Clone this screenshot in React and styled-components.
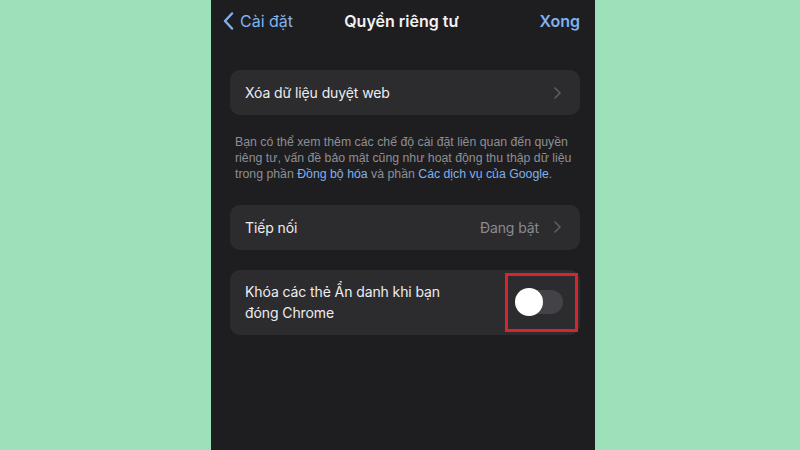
import React from 'react';
import styled, { createGlobalStyle } from 'styled-components';

const Global = createGlobalStyle`
  html, body { margin: 0; padding: 0; }
  body {
    width: 800px;
    height: 450px;
    overflow: hidden;
    background: #9ee0b9;
    font-family: Inter, "Noto Sans", "Liberation Sans", sans-serif;
    -webkit-font-smoothing: antialiased;
  }
`;

const Stage = styled.div`
  width: 800px;
  height: 450px;
  display: flex;
  justify-content: center;
  padding-left: 6px;
  box-sizing: border-box;
`;

const Phone = styled.div`
  width: 384px;
  height: 450px;
  background: #1e1e21;
  display: flex;
  flex-direction: column;
`;

const NavBar = styled.div`
  height: 42px;
  display: grid;
  grid-template-columns: 1fr auto 1fr;
  align-items: center;
  padding: 0 15px 0 12px;
`;

const Back = styled.div`
  display: flex;
  align-items: center;
  gap: 6px;
  color: #80b2ee;
  font-size: 16px;
  svg { width: 11px; height: 18px; }
`;

const Title = styled.div`
  color: #f2f2f4;
  font-size: 16px;
  font-weight: 600;
`;

const Done = styled.div`
  justify-self: end;
  color: #80b2ee;
  font-size: 16px;
  font-weight: 600;
`;

const Content = styled.div`
  padding: 28px 15px 0 19px;
  display: flex;
  flex-direction: column;
`;

const Card = styled.div`
  background: #2c2c2f;
  border-radius: 10px;
  min-height: ${p => p.$tall ? '65px' : '45px'};
  display: flex;
  align-items: center;
  padding: 0 19px 0 15px;
  margin-bottom: ${p => p.$gap || 0}px;
  box-sizing: border-box;
`;

const Label = styled.div`
  flex: 1;
  color: #ededf0;
  font-size: 14px;
  letter-spacing: -0.1px;
  line-height: 21px;
`;

const Value = styled.span`
  color: #8b8b90;
  font-size: 14px;
  letter-spacing: -0.1px;
  margin-right: 15px;
`;

const Chevron = styled.svg`
  width: 7px;
  height: 12px;
  flex: none;
`;

const Footer = styled.p`
  margin: 19px 0 22px 5px;
  color: #8e8e93;
  font-family: "Liberation Sans", Arial, sans-serif;
  font-size: 12.3px;
  line-height: 16.2px;
  a { color: #7fb0ee; text-decoration: none; }
`;

const Highlight = styled.div`
  border: 3px solid #d8242c;
  width: 73px;
  height: 59px;
  box-sizing: border-box;
  display: flex;
  align-items: center;
  justify-content: center;
  margin-right: -17px;
  padding-right: 4px;
`;

const Track = styled.div`
  position: relative;
  width: 47px;
  height: 24px;
  border-radius: 12px;
  background: #434347;
`;

const Knob = styled.div`
  position: absolute;
  left: -1px;
  top: -2px;
  width: 28px;
  height: 28px;
  border-radius: 50%;
  background: #fff;
`;

const Arrow = () => (
  <Chevron viewBox="0 0 7 12" fill="none">
    <path d="M1 1l5 5-5 5" stroke="#5d5d62" strokeWidth="1.6" strokeLinecap="round" strokeLinejoin="round" />
  </Chevron>
);

export default function App() {
  return (
    <Stage>
      <Global />
      <Phone>
        <NavBar>
          <Back>
            <svg viewBox="0 0 11 18" fill="none">
              <path d="M9 1.5L2 9l7 7.5" stroke="#80b2ee" strokeWidth="2.4" strokeLinecap="round" strokeLinejoin="round" />
            </svg>
            Cài đặt
          </Back>
          <Title>Quyền riêng tư</Title>
          <Done>Xong</Done>
        </NavBar>
        <Content>
          <Card>
            <Label>Xóa dữ liệu duyệt web</Label>
            <Arrow />
          </Card>
          <Footer>
            Bạn có thể xem thêm các chế độ cài đặt liên quan đến quyền<br />
            riêng tư, vấn đề bảo mật cũng như hoạt động thu thập dữ liệu<br />
            trong phần <a>Đồng bộ hóa</a> và phần <a>Các dịch vụ của Google</a>.
          </Footer>
          <Card $gap={20}>
            <Label>Tiếp nối</Label>
            <Value>Đang bật</Value>
            <Arrow />
          </Card>
          <Card $tall>
            <Label>Khóa các thẻ Ẩn danh khi bạn<br />đóng Chrome</Label>
            <Highlight>
              <Track><Knob /></Track>
            </Highlight>
          </Card>
        </Content>
      </Phone>
    </Stage>
  );
}
